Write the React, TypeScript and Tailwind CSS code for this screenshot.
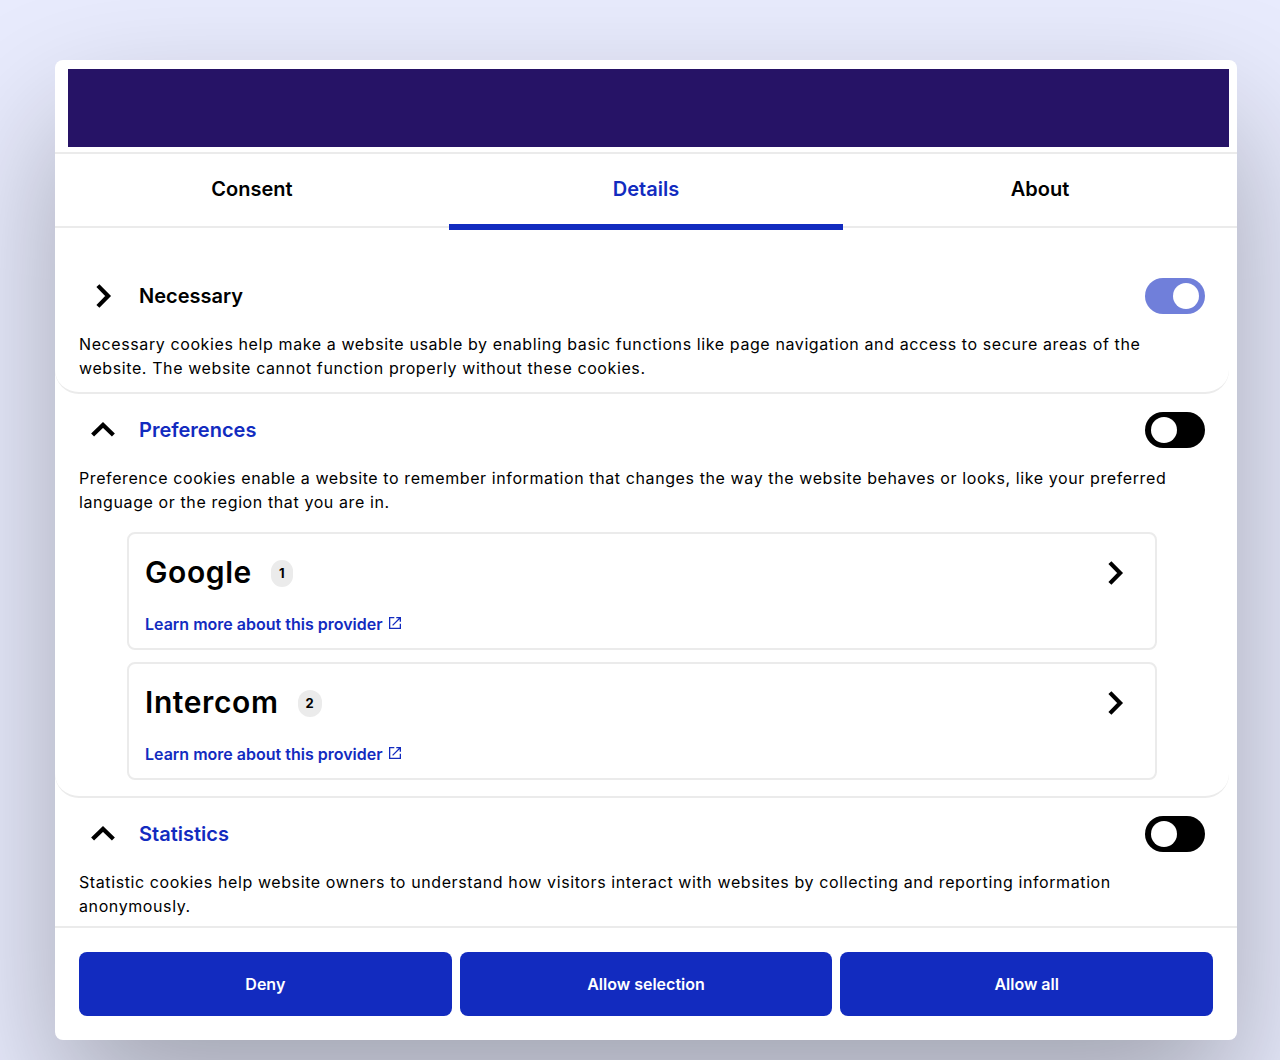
import type { ReactNode } from "react";

function ChevronRight() {
  return (
    <svg viewBox="0 0 24 24" className="size-6 shrink-0" fill="none" stroke="#000" strokeWidth="4.2">
      <path d="M6.9 1.6 17.1 12 6.9 22.4" />
    </svg>
  );
}

function ChevronUp() {
  return (
    <svg viewBox="0 0 24 24" className="size-6 shrink-0" fill="none" stroke="#000" strokeWidth="4.2">
      <path d="M1.6 17.1 12 6.9 22.4 17.1" />
    </svg>
  );
}

function ExternalIcon() {
  return (
    <svg viewBox="0 0 14 14" className="size-[14px] shrink-0" fill="none" stroke="currentColor" strokeWidth="1.3">
      <path d="M6.3 1.65H1.65v10.7h10.7V7.7" />
      <path d="M8.3 1.65h4.05v4.05M12.2 1.8 4.6 9.4" />
    </svg>
  );
}

function Toggle({ on }: { on?: boolean }) {
  return (
    <div
      role="switch"
      aria-checked={!!on}
      className={
        on
          ? "flex h-9 w-[60px] items-center justify-end rounded-full bg-[#707fda] px-[6px]"
          : "flex h-9 w-[60px] items-center justify-start rounded-full bg-black px-[6px]"
      }
    >
      <div className="size-[26px] rounded-full bg-white" />
    </div>
  );
}

function Section({
  title,
  text,
  open,
  on,
  children,
}: {
  title: string;
  text: string;
  open?: boolean;
  on?: boolean;
  children?: ReactNode;
}) {
  return (
    <section className="w-[1174px] shrink-0 rounded-b-[24px] border-b-2 border-[#ebebeb] pl-6">
      <div className="flex h-[72px] items-center pr-6">
        <div className="flex w-[60px] pl-3">{open ? <ChevronUp /> : <ChevronRight />}</div>
        <h2 className={open ? "text-[20px] font-semibold text-[#122bbf]" : "text-[20px] font-semibold text-black"}>
          {title}
        </h2>
        <div className="ml-auto">
          <Toggle on={on} />
        </div>
      </div>
      <p className="w-[1110px] text-[16px] leading-6 tracking-[0.6px]">{text}</p>
      {children}
    </section>
  );
}

function Provider({ name, count }: { name: string; count: number }) {
  return (
    <div className="h-[118px] w-[1030px] rounded-lg border-2 border-[#ebebeb] pl-4 pr-[28px]">
      <div className="flex h-[78px] items-center">
        <h3 className="pb-[2px] text-[30px] font-semibold tracking-[0.6px]">{name}</h3>
        <span className="ml-[19.5px] flex h-[27px] items-center rounded-[12px] bg-[#ebebeb] px-[7.5px] pt-px text-[13px] font-bold tracking-[0.6px]">
          {count}
        </span>
        <span className="ml-auto">
          <ChevronRight />
        </span>
      </div>
      <a href="#" className="flex h-6 items-center gap-[5px] text-[16px] font-semibold text-[#122bbf]">
        Learn more about this provider
        <span className="-mt-[3px]">
          <ExternalIcon />
        </span>
      </a>
    </div>
  );
}

const TABS = ["Consent", "Details", "About"];
const ACTIONS = ["Deny", "Allow selection", "Allow all"];

export default function App() {
  return (
    <div className="h-[1060px] w-[1280px] overflow-hidden bg-[#e8ebfd] pl-[55px] pt-[60px] font-['Inter',sans-serif] text-black">
      <div className="flex h-[980px] w-[1182px] flex-col rounded-lg bg-white shadow-[0_64px_136px_rgba(0,0,0,0.3)]">
        <header className="h-[94px] shrink-0 border-b-2 border-[#ebebeb] pl-[13px] pr-2 pt-[9px]">
          <div className="h-[78px] bg-[#261366]" />
        </header>
        <nav className="grid h-[74px] shrink-0 grid-cols-3 border-b-2 border-[#ebebeb]">
          {TABS.map((tab) => (
            <button
              key={tab}
              className={
                tab === "Details"
                  ? "h-[76px] border-b-[6px] border-[#122bbf] text-[20px] font-semibold text-[#122bbf]"
                  : "h-[76px] border-b-[6px] border-transparent text-[20px] font-semibold"
              }
            >
              {tab}
            </button>
          ))}
        </nav>
        <main className="flex min-h-0 flex-1 flex-col overflow-hidden pt-8">
          <Section
            title="Necessary"
            on
            text="Necessary cookies help make a website usable by enabling basic functions like page navigation and access to secure areas of the website. The website cannot function properly without these cookies."
          >
            <div className="h-3" />
          </Section>
          <Section
            title="Preferences"
            open
            text="Preference cookies enable a website to remember information that changes the way the website behaves or looks, like your preferred language or the region that you are in."
          >
            <div className="flex flex-col gap-3 pb-4 pl-12 pt-[18px]">
              <Provider name="Google" count={1} />
              <Provider name="Intercom" count={2} />
            </div>
          </Section>
          <Section
            title="Statistics"
            open
            text="Statistic cookies help website owners to understand how visitors interact with websites by collecting and reporting information anonymously."
          >
            <div className="h-24" />
          </Section>
        </main>
        <footer className="grid h-[114px] shrink-0 grid-cols-3 gap-2 border-t-2 border-[#ebebeb] p-6">
          {ACTIONS.map((action) => (
            <button key={action} className="h-16 rounded-lg bg-[#122bbf] text-[16px] font-semibold text-white">
              {action}
            </button>
          ))}
        </footer>
      </div>
    </div>
  );
}
